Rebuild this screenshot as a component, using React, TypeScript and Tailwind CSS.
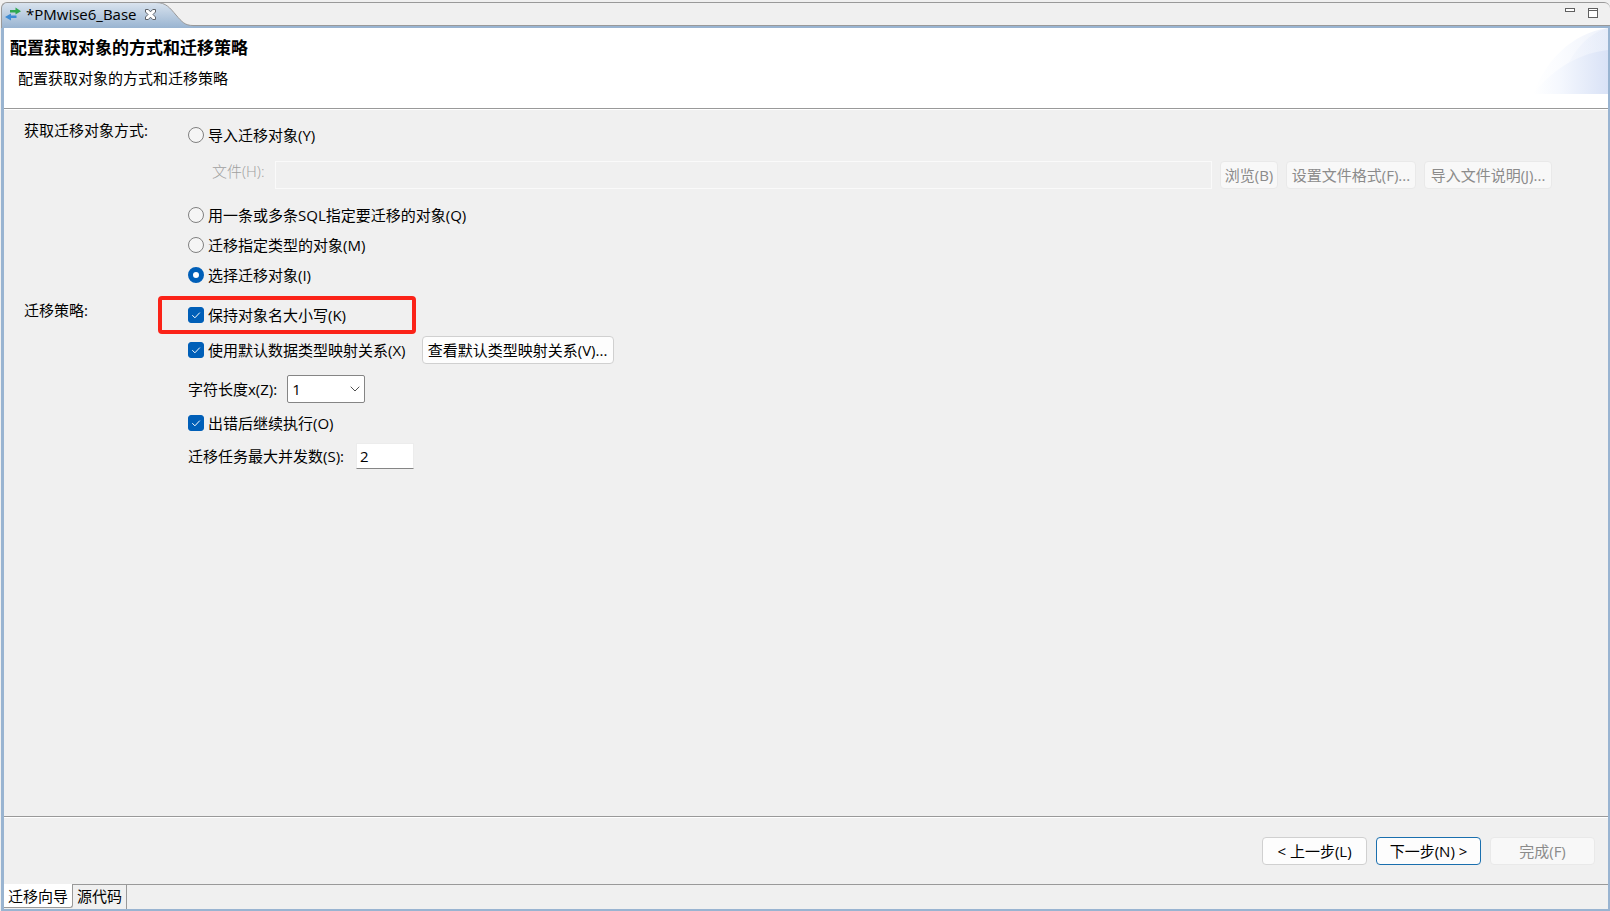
import React, { useState } from 'react';
import { clsx } from 'clsx';

type ObjectSource = 'import' | 'sql' | 'type' | 'select';

const SOURCES_AFTER_FILE: Array<{ value: ObjectSource; label: string }> = [
  { value: 'sql', label: '用一条或多条SQL指定要迁移的对象(Q)' },
  { value: 'type', label: '迁移指定类型的对象(M)' },
  { value: 'select', label: '选择迁移对象(I)' },
];

const PAGES = ['迁移向导', '源代码'];

interface ButtonProps {
  children: React.ReactNode;
  disabled?: boolean;
  primary?: boolean;
  className?: string;
}

const PushButton: React.FC<ButtonProps> = ({ children, disabled, primary, className }) => (
  <button
    type="button"
    disabled={disabled}
    className={clsx(
      'h-7 shrink-0 rounded border text-center whitespace-pre',
      disabled && 'border-[#e9e9e9] bg-[#f8f8f8] text-[#8b8b8b]',
      !disabled && 'bg-[#fdfdfd] text-black',
      !disabled && (primary ? 'border-[#1a6fae]' : 'border-[#d0d0d0]'),
      className
    )}
  >
    {children}
  </button>
);

interface RadioProps {
  label: string;
  checked: boolean;
  onSelect: () => void;
}

const RadioRow: React.FC<RadioProps> = ({ label, checked, onSelect }) => (
  <label className="flex h-[30px] items-center gap-1">
    <input
      type="radio"
      name="object-source"
      checked={checked}
      onChange={onSelect}
      className="size-4 appearance-none rounded-full border border-[#808080] bg-[#f5f5f5] checked:border-5 checked:border-[#005fb8] checked:bg-white"
    />
    {label}
  </label>
);

const CheckRow: React.FC<{ label: string }> = ({ label }) => {
  const [checked, setChecked] = useState(true);
  return (
    <label className="flex h-[30px] items-center gap-1">
      <span className="relative size-4">
        <input
          type="checkbox"
          checked={checked}
          onChange={(e) => setChecked(e.target.checked)}
          className="block size-4 appearance-none rounded-[3px] border border-[#808080] bg-[#f5f5f5] checked:border-[#005fb8] checked:bg-[#005fb8]"
        />
        {checked && (
          <svg viewBox="0 0 16 16" className="pointer-events-none absolute inset-0 size-4" fill="none" stroke="white">
            <path d="M4.3 8.2 L6.9 10.8 L11.8 5.6" />
          </svg>
        )}
      </span>
      {label}
    </label>
  );
};

const TransferIcon = () => (
  <svg width="17" height="14" viewBox="0 0 17 14">
    <path d="M5 3H10.5V0.5L16 4.2L10.5 7.5V5.5H5Z" fill="#2fa84f" />
    <path d="M11.5 8.5H6V6.5L0 10L6 13.5V11H11.5Z" fill="#3d8bd4" />
  </svg>
);

const CloseIcon = () => (
  <svg width="11" height="11" viewBox="0 0 11 11" fill="white" stroke="#5c6168">
    <path d="M0.5 0.5H3.3L5.5 2.8L7.7 0.5H10.5V3L8 5.5L10.5 8V10.5H7.7L5.5 8.2L3.3 10.5H0.5V8L3 5.5L0.5 3Z" />
  </svg>
);

// Sloped right edge of the active editor tab
const TabCurve = () => (
  <svg width="37" height="26" viewBox="0 0 37 26" className="shrink-0">
    <defs>
      <linearGradient id="tab-fill" x1="0" y1="0" x2="0" y2="1">
        <stop offset="0" stopColor="#d9e3ee" />
        <stop offset="1" stopColor="#99b4d1" />
      </linearGradient>
    </defs>
    <path d="M0 0.5C10 0.5 14 6 20 13C26 20 29 23.5 37 23.5V26H0Z" fill="url(#tab-fill)" />
    <path d="M0 0.5C10 0.5 14 6 20 13C26 20 29 23.5 37 23.5M0 0.5H37" fill="none" stroke="#999999" />
  </svg>
);

const BannerArt = () => (
  <svg width="75" height="66" viewBox="0 0 75 66" className="shrink-0">
    <defs>
      <linearGradient id="banner-fade" gradientUnits="userSpaceOnUse" x1="0" y1="0" x2="75" y2="0">
        <stop offset="0" stopColor="#ffffff" />
        <stop offset="0.35" stopColor="#f5f8fe" />
        <stop offset="1" stopColor="#d9e2f6" />
      </linearGradient>
    </defs>
    <path d="M0 66C12 34 38 5 75 0V66Z" fill="url(#banner-fade)" opacity="0.45" />
    <path d="M34 38C43 20 56 5 75 0V30Z" fill="url(#banner-fade)" opacity="0.4" />
    <path d="M0 66C16 46 40 26 75 22V66Z" fill="url(#banner-fade)" />
  </svg>
);

export default function App() {
  const [source, setSource] = useState<ObjectSource>('select');
  const [page, setPage] = useState(PAGES[0]);

  return (
    <div className="flex min-h-screen flex-col bg-[#f0f0f0] font-['Open_Sans','Noto_Sans_CJK_SC',sans-serif] text-[15px] leading-5 text-black">
      {/* Editor tab strip */}
      <header className="flex h-7 shrink-0 items-end pt-0.5 pl-px">
        <div className="flex h-[26px] items-center rounded-tl-md border-t border-l border-[#999999] bg-linear-to-b from-[#d9e3ee] to-[#99b4d1] pb-[3px] pl-[3px]">
          <button type="button" className="flex items-center gap-1 whitespace-nowrap">
            <TransferIcon />
            *PMwise6_Base
          </button>
          <button type="button" aria-label="关闭" className="ml-2">
            <CloseIcon />
          </button>
        </div>
        <TabCurve />
        <div className="flex h-[26px] flex-1 items-start justify-end gap-[13px] rounded-tr-md border-t border-[#999999] pt-[5px] pr-3 shadow-[inset_0_-2px_0_#99b4d1,inset_0_-3px_0_#999999]">
          <button type="button" aria-label="最小化" className="h-1 w-2.5 border border-[#606060] bg-white" />
          <button type="button" aria-label="最大化" className="h-2.5 w-2.5 border border-[#606060] bg-white shadow-[inset_0_1px_0_white,inset_0_2px_0_#606060]" />
        </div>
      </header>

      <div className="ml-px flex flex-1 flex-col border-r-2 border-b-2 border-l-3 border-[#99b4d1]">
        {/* Wizard title */}
        <section className="flex h-[81px] shrink-0 justify-between border-b border-[#999999] bg-white">
          <div className="pl-1.5">
            <h1 className="pt-2 text-[17px] leading-6 font-bold">配置获取对象的方式和迁移策略</h1>
            <p className="pt-2 pl-2">配置获取对象的方式和迁移策略</p>
          </div>
          <BannerArt />
        </section>

        <main className="flex-1 border-t border-white pt-2.5 pr-14 pl-5">
          {/* Object source */}
          <div role="radiogroup" aria-labelledby="source-title" className="grid grid-cols-[164px_1fr]">
            <div id="source-title">获取迁移对象方式:</div>
            <div>
              <RadioRow label="导入迁移对象(Y)" checked={source === 'import'} onSelect={() => setSource('import')} />
              <div className="my-[11px] flex h-7 gap-2 pl-6">
                <label htmlFor="file" className="-mr-px w-14 font-light whitespace-nowrap text-[#a0a0a0]">
                  文件(H):
                </label>
                <input id="file" type="text" disabled className="h-7 min-w-0 flex-1 border border-[#fafafa] bg-[#f0f0f0] px-1" />
                <PushButton disabled className="w-[58px]">浏览(B)</PushButton>
                <PushButton disabled className="w-[130px]">设置文件格式(F)...</PushButton>
                <PushButton disabled className="w-[128px]">导入文件说明(J)...</PushButton>
              </div>
              {SOURCES_AFTER_FILE.map((item) => (
                <RadioRow
                  key={item.value}
                  label={item.label}
                  checked={source === item.value}
                  onSelect={() => setSource(item.value)}
                />
              ))}
            </div>
          </div>

          {/* Migration policy */}
          <div role="group" aria-labelledby="policy-title" className="mt-1.5 grid grid-cols-[164px_1fr]">
            <div id="policy-title" className="pt-1">迁移策略:</div>
            <div>
              <div className="-ml-[30px] flex h-[38px] w-[258px] items-center rounded border-4 border-[#fb2318] pl-[26px]">
                <CheckRow label="保持对象名大小写(K)" />
              </div>
              <div className="mt-0.5 flex h-7 items-center gap-4">
                <CheckRow label="使用默认数据类型映射关系(X)" />
                <PushButton className="w-48">查看默认类型映射关系(V)...</PushButton>
              </div>
              <div className="mt-[11px] flex h-7 items-center gap-2.5">
                <label htmlFor="char-length">字符长度x(Z):</label>
                <div className="relative">
                  <select
                    id="char-length"
                    defaultValue="1"
                    className="block h-7 w-[78px] appearance-none rounded-[2px] border border-[#858585] bg-white pl-1"
                  >
                    <option>1</option>
                    <option>2</option>
                    <option>3</option>
                    <option>4</option>
                  </select>
                  <svg viewBox="0 0 10 6" className="pointer-events-none absolute top-[11px] right-[5px] h-1.5 w-2.5" fill="none" stroke="#505050">
                    <path d="M0.7 0.7L5 5L9.3 0.7" />
                  </svg>
                </div>
              </div>
              <div className="my-[5px]">
                <CheckRow label="出错后继续执行(O)" />
              </div>
              <div className="flex h-[26px] items-center gap-3">
                <label htmlFor="concurrency">迁移任务最大并发数(S):</label>
                <input
                  id="concurrency"
                  type="text"
                  defaultValue="2"
                  className="h-[26px] w-[58px] border border-[#ececec] border-b-[#858585] bg-white px-[3px]"
                />
              </div>
            </div>
          </div>
        </main>

        {/* Wizard buttons */}
        <footer className="flex h-[68px] shrink-0 justify-end gap-[9px] border-t border-[#999999] pt-5 pr-[13px] shadow-[inset_0_1px_0_white]">
          <PushButton className="w-[105px]">&lt; 上一步(L)</PushButton>
          <PushButton primary className="w-[105px]">下一步(N) &gt;</PushButton>
          <PushButton disabled className="w-[105px]">完成(F)</PushButton>
        </footer>

        {/* Editor page tabs */}
        <nav className="flex h-[25px] shrink-0">
          {PAGES.map((name) => (
            <button
              key={name}
              type="button"
              onClick={() => setPage(name)}
              className={clsx(
                'border-r border-[#999999] px-1 whitespace-nowrap',
                page === name ? 'h-6 rounded-br-[3px] border-b bg-white' : 'h-[25px] border-t pb-0.5'
              )}
            >
              {name}
            </button>
          ))}
          <div className="flex-1 border-t border-[#999999]" />
        </nav>
      </div>
    </div>
  );
}
